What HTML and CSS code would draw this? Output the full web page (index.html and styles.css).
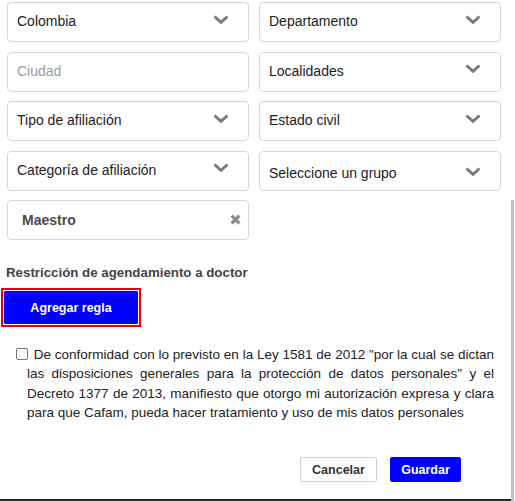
FILE: index.html
```html
<!DOCTYPE html>
<html lang="es">
<head>
<meta charset="utf-8">
<title>Formulario</title>
<link rel="stylesheet" href="styles.css">
</head>
<body>
<div class="page">
  <div class="grid">
    <div class="field"><span class="val">Colombia</span><svg class="chev" viewBox="0 0 16 9"><polyline points="1.5,1.5 8,7.3 14.5,1.5"/></svg></div>
    <div class="field"><span class="val">Departamento</span><svg class="chev" viewBox="0 0 16 9"><polyline points="1.5,1.5 8,7.3 14.5,1.5"/></svg></div>
    <div class="field"><span class="val placeholder">Ciudad</span></div>
    <div class="field"><span class="val">Localidades</span><svg class="chev" viewBox="0 0 16 9"><polyline points="1.5,1.5 8,7.3 14.5,1.5"/></svg></div>
    <div class="field"><span class="val">Tipo de afiliación</span><svg class="chev" viewBox="0 0 16 9"><polyline points="1.5,1.5 8,7.3 14.5,1.5"/></svg></div>
    <div class="field"><span class="val">Estado civil</span><svg class="chev" viewBox="0 0 16 9"><polyline points="1.5,1.5 8,7.3 14.5,1.5"/></svg></div>
    <div class="field"><span class="val">Categoría de afiliación</span><svg class="chev" viewBox="0 0 16 9"><polyline points="1.5,1.5 8,7.3 14.5,1.5"/></svg></div>
    <div class="field field-low"><span class="val">Seleccione un grupo</span><svg class="chev" viewBox="0 0 16 9"><polyline points="1.5,1.5 8,7.3 14.5,1.5"/></svg></div>
    <div class="field field-tag"><span class="tag">Maestro</span><svg class="clear" viewBox="0 0 10 10"><path d="M1.5 1.5 L8.5 8.5 M8.5 1.5 L1.5 8.5"/></svg></div>
  </div>

  <div class="section-label">Restricción de agendamiento a doctor</div>
  <div class="focus-ring"><button class="btn btn-primary btn-add">Agregar regla</button></div>

  <div class="consent">
    <p class="consent-text"><span class="check"></span> De conformidad con lo previsto en la Ley 1581 de 2012 "por la cual se dictan las disposiciones generales para la protección de datos personales" y el Decreto 1377 de 2013, manifiesto que otorgo mi autorización expresa y clara para que Cafam, pueda hacer tratamiento y uso de mis datos personales</p>
  </div>

  <div class="actions">
    <button class="btn btn-default">Cancelar</button>
    <button class="btn btn-primary btn-save">Guardar</button>
  </div>
</div>
<div class="scroll-thumb"></div>
<div class="bottom-edge"></div>
</body>
</html>
```

FILE: styles.css
```css
* { box-sizing: border-box; }
html, body {
  margin: 0;
  padding: 0;
  background: #fff;
  font-family: "Liberation Sans", Arial, sans-serif;
  color: #1c1c1c;
  overflow: hidden;
}
.page {
  width: 515px;
  height: 501px;
  padding-top: 2px;
  display: flex;
  flex-direction: column;
}
.grid {
  display: grid;
  grid-template-columns: 242px 242px;
  column-gap: 10px;
  row-gap: 9.5px;
  padding-left: 7px;
  grid-auto-rows: 40px;
}
.field {
  border: 1px solid #d6d6d6;
  border-radius: 4px;
  display: flex;
  align-items: center;
  justify-content: space-between;
  padding: 0 19px 2px 9px;
  font-size: 14px;
}
.field-low { padding-top: 5px; padding-bottom: 0; }
.val { color: #1c1c1c; }
.placeholder { color: #9a9a9a; }
.chev {
  width: 16px;
  height: 9px;
  margin-top: -4px;
  fill: none;
  stroke: #7a7a7a;
  stroke-width: 3;
}
.field-tag { padding-left: 14px; padding-right: 7px; padding-bottom: 0; }
.tag { font-weight: bold; color: #4a4a4a; }
.clear {
  width: 11px;
  height: 11px;
  fill: none;
  stroke: #8a8a8a;
  stroke-width: 3;
  margin-top: -2px;
}
.section-label {
  margin-top: 25px;
  padding-left: 6px;
  font-size: 13.3px;
  line-height: 16px;
  font-weight: bold;
  color: #444;
}
.focus-ring {
  margin-top: 7px;
  margin-left: 1px;
  width: 140px;
  height: 39px;
  border: 2px solid #e8000b;
  padding: 1px;
}
.btn {
  font-family: "Liberation Sans", Arial, sans-serif;
  font-weight: bold;
  font-size: 12.5px;
  border-radius: 2px;
  cursor: pointer;
  padding: 0;
}
.btn-primary {
  background: #0000fe;
  color: #fff;
  border: 1px solid #0000fe;
}
.btn-add {
  width: 100%;
  height: 100%;
  border-radius: 1px;
}
.consent {
  margin-top: 18px;
  padding-left: 27px;
  padding-right: 21px;
}
.consent-text {
  margin: 0;
  font-size: 13.5px;
  line-height: 19.3px;
  text-align: justify;
  color: #222;
}
.check {
  display: inline-block;
  width: 12px;
  height: 12px;
  margin-left: -11px;
  margin-right: 2px;
  border: 1px solid #767676;
  border-radius: 2px;
  vertical-align: -1px;
  background: #fff;
}
.actions {
  margin-top: auto;
  margin-bottom: 19px;
  display: flex;
  justify-content: flex-end;
  gap: 13px;
  padding-right: 54px;
}
.actions .btn { height: 25px; }
.btn-default {
  width: 77px;
  background: #fff;
  color: #333;
  border: 1px solid #ccc;
}
.btn-save { width: 71px; }
.scroll-thumb {
  position: absolute;
  right: 1px;
  top: 200px;
  bottom: 0;
  width: 3px;
  background: #c1c1c1;
}
.bottom-edge {
  position: absolute;
  left: 0;
  right: 4px;
  bottom: 0;
  height: 2px;
  background: #262626;
}
```
